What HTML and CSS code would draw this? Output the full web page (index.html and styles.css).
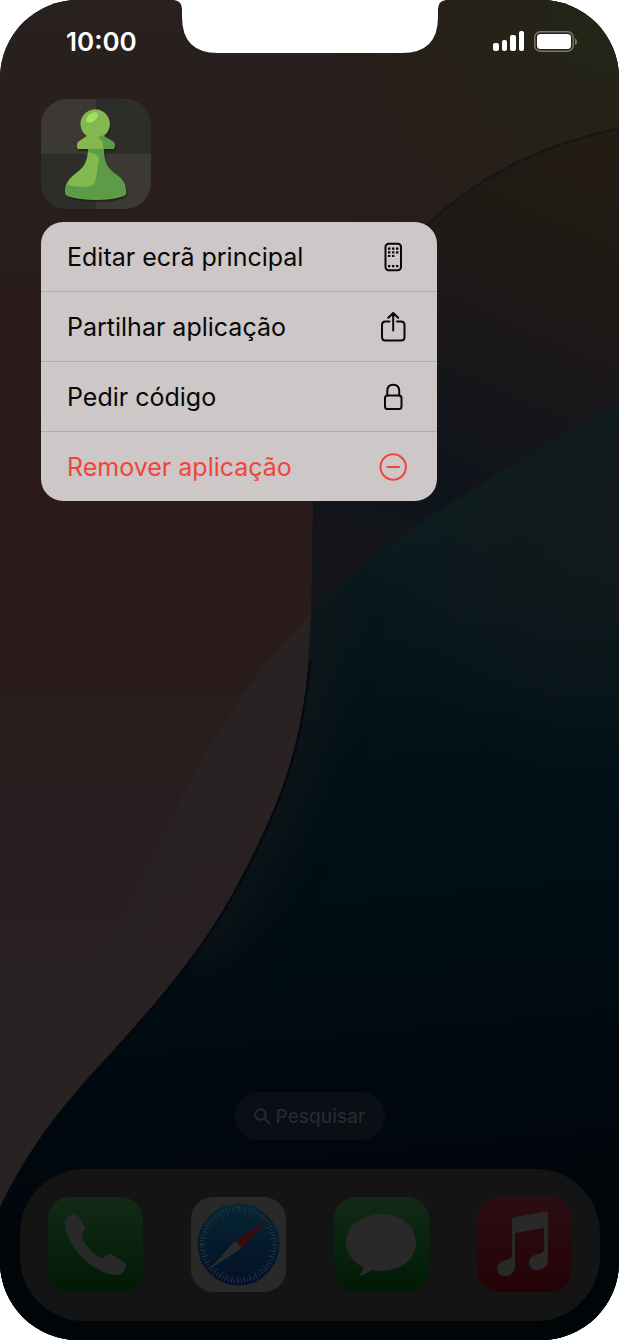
FILE: index.html
```
<!DOCTYPE html>
<html lang="pt">
<head>
    <meta charset="UTF-8">
    <meta name="viewport" content="width=device-width, initial-scale=1.0">
    <title>Ecrã principal</title>
    <link rel="stylesheet" href="styles.css">
</head>
<body>
    <div class="phone">
        <svg class="wallpaper" viewBox="0 0 619 1340" preserveAspectRatio="none" aria-hidden="true">
            <defs>
                <linearGradient id="redSide" x1="0" y1="0" x2="0" y2="1">
                    <stop offset="0" stop-color="#282120"/>
                    <stop offset=".14" stop-color="#291d1d"/>
                    <stop offset=".4" stop-color="#2a191a"/>
                    <stop offset=".56" stop-color="#291d1e"/>
                    <stop offset=".68" stop-color="#291f22"/>
                    <stop offset=".78" stop-color="#282322"/>
                    <stop offset="1" stop-color="#262221"/>
                </linearGradient>
                <radialGradient id="olive" gradientUnits="userSpaceOnUse" cx="600" cy="20" r="330">
                    <stop offset="0" stop-color="#242518"/>
                    <stop offset=".5" stop-color="#262016" stop-opacity=".9"/>
                    <stop offset="1" stop-color="#281d1b" stop-opacity="0"/>
                </radialGradient>
                <linearGradient id="middle" gradientUnits="userSpaceOnUse" x1="590" y1="130" x2="400" y2="560">
                    <stop offset="0" stop-color="#221c13"/>
                    <stop offset=".35" stop-color="#1f1917"/>
                    <stop offset=".6" stop-color="#16161a"/>
                    <stop offset=".85" stop-color="#0e141b"/>
                    <stop offset="1" stop-color="#15161a"/>
                </linearGradient>
                <linearGradient id="blue" gradientUnits="userSpaceOnUse" x1="420" y1="500" x2="500" y2="1340">
                    <stop offset="0" stop-color="#0d1e20"/>
                    <stop offset=".1" stop-color="#09181d"/>
                    <stop offset=".3" stop-color="#021118"/>
                    <stop offset=".6" stop-color="#000b12"/>
                    <stop offset=".8" stop-color="#01060c"/>
                    <stop offset="1" stop-color="#000508"/>
                </linearGradient>
                <radialGradient id="glow" gradientUnits="userSpaceOnUse" cx="619" cy="520" r="260">
                    <stop offset="0" stop-color="#12191b"/>
                    <stop offset="1" stop-color="#12191b" stop-opacity="0"/>
                </radialGradient>
                <linearGradient id="sand" gradientUnits="userSpaceOnUse" x1="190" y1="760" x2="260" y2="800">
                    <stop offset="0" stop-color="#282322"/>
                    <stop offset="1" stop-color="#292122"/>
                </linearGradient>
                <linearGradient id="sandFade" x1="0" y1="0" x2="0" y2="1">
                    <stop offset="0" stop-color="#fff"/>
                    <stop offset=".5" stop-color="#fff"/>
                    <stop offset="1" stop-color="#fff" stop-opacity="0"/>
                </linearGradient>
                <mask id="fade"><rect x="0" y="600" width="330" height="430" fill="url(#sandFade)"/></mask>
                <clipPath id="rightSide">
                    <path d="M660 120C560 137 490 166 430 222C345 300 315 400 314 510C313 570 313 620 309 660C301 750 280 806 233 893C200 952 165 994 100 1065C55 1114 20 1160 -8 1225V1400H660Z"/>
                </clipPath>
                <clipPath id="wave">
                    <path d="M640 386C540 455 390 524 300 625L-10 900V1350H640Z"/>
                </clipPath>
                <filter id="soft" filterUnits="userSpaceOnUse" color-interpolation-filters="sRGB" x="0" y="450" width="619" height="890"><feGaussianBlur stdDeviation="22"/></filter>
            </defs>
            <rect width="619" height="1340" fill="url(#redSide)"/>
            <rect width="619" height="400" fill="url(#olive)"/>
            <path mask="url(#fade)" fill="url(#sand)" d="M330 596C250 670 206 745 170 820C150 865 138 900 105 930V1040H330Z"/>
            <g clip-path="url(#rightSide)">
                <rect width="619" height="1340" fill="url(#middle)"/>
                <g clip-path="url(#wave)">
                    <rect width="619" height="1340" fill="url(#blue)"/>
                    <rect y="200" width="619" height="700" fill="url(#glow)"/>
                    <path fill="none" stroke="#14181a" stroke-width="44" opacity=".7" filter="url(#soft)" d="M316 560C313 750 284 806 240 893L190 960"/>
                </g>
                <path fill="none" stroke="#04090e" stroke-width="5" opacity=".8" d="M309 660C301 750 280 806 233 893C200 952 165 994 100 1065C55 1114 20 1160 -8 1225"/>
            </g>
            <path fill="none" stroke="#10171a" stroke-width="2" d="M660 120C560 137 490 166 430 222C345 300 315 400 314 510C313 570 313 620 309 660"/>
        </svg>

        <svg class="notch" width="272" height="53" viewBox="0 0 272 53" aria-hidden="true">
            <path fill="#fff" d="M0 0H272Q264 1 264 9V17Q264 53 228 53H44Q8 53 8 17V9Q8 1 0 0Z"/>
        </svg>

        <header class="status">
            <time class="clock">10:00</time>
            <div class="indicators">
                <svg width="32" height="20" viewBox="0 0 32 20" fill="#fff" aria-hidden="true">
                    <rect x="0" y="12" width="6" height="8" rx="2"/>
                    <rect x="9" y="9" width="5" height="11" rx="2"/>
                    <rect x="17" y="4" width="6" height="16" rx="2"/>
                    <rect x="26" y="0" width="5" height="20" rx="2"/>
                </svg>
                <svg width="44" height="21" viewBox="0 0 44 21" aria-hidden="true">
                    <rect x=".8" y=".8" width="38.4" height="19.4" rx="5.5" fill="none" stroke="#7e7a70" stroke-width="1.4"/>
                    <rect x="3" y="3" width="34" height="15" rx="3.5" fill="#fff"/>
                    <path d="M41 7q2 1 2 3.500t-2 3.500z" fill="#7e7a70"/>
                </svg>
            </div>
        </header>

        <main class="home">
            <button class="app" type="button" aria-label="Xadrez">
                <svg viewBox="0 0 110 110" aria-hidden="true">
                    <rect width="110" height="110" fill="#3c3834"/>
                    <path d="M55 0H110V55H55ZM0 55H55V110H0Z" fill="#2d2d2a"/>
                    <path transform="translate(1 2)" fill="#181b14" opacity=".6" d="M46 37A14.500 14.500 0 1 1 63 37L73 43Q75 46 73 50H63C63 66 69 71 76 76C83 81 85 86 85 92Q86 96 83 97Q72 101 55 101T26 97Q24 96 24 92C24 86 26 81 33 76C40 71 47 66 47 50H37Q35 46 37 43Z"/>
                    <path fill="#5d9b47" d="M46 37A14.500 14.500 0 1 1 63 37L73 43Q75 46 73 50H63C63 66 69 71 76 76C83 81 85 86 85 92Q86 96 83 97Q72 101 55 101T26 97Q24 96 24 92C24 86 26 81 33 76C40 71 47 66 47 50H37Q35 46 37 43Z"/>
                    <path fill="#82b84d" d="M46 37A14.500 14.500 0 1 1 66 33Q63 37 57 38L62 43V50H37Q35 46 37 43ZM47 53Q58 54 58 61L55 80Q53 88 44 88Q34 88 26 86C28 81 30 78 34 75C41 70 46 65 47 53Z"/>
                    <ellipse cx="51" cy="18.500" rx="6.800" ry="4" fill="#a5df68" transform="rotate(-38 51 18.500)"/>
                </svg>
            </button>

            <div class="menu" role="menu">
                <button class="item" type="button" role="menuitem">
                    <span>Editar ecrã principal</span>
                    <svg viewBox="0 0 30 30" aria-hidden="true">
                        <rect x="7.500" y="1.800" width="15.500" height="26.400" rx="3.200"/>
                        <path class="dots" d="M10 5.500h2.400v2.200H10zm4 0h2.400v2.200H14zm4 0h2.400v2.200H18zM10 9.200h2.400v2.200H10zm4 0h2.400v2.200H14zm4 0h2.400v2.200H18zM10 12.900h2.400v2.200H10zm4 0h2.400v2.200H14zM10 23h2.400v2.200H10zm4 0h2.400v2.200H14zm4 0h2.400v2.200H18z"/>
                    </svg>
                </button>
                <button class="item" type="button" role="menuitem">
                    <span>Partilhar aplicação</span>
                    <svg viewBox="0 0 30 30" aria-hidden="true">
                        <path d="M11.500 9.500H7.500Q4 9.500 4 13V25Q4 28.500 7.500 28.500H23Q26.500 28.500 26.500 25V13Q26.500 9.500 23 9.500H19M15.200 18.500V1M10.300 5.800L15.200 1L20.100 5.800"/>
                    </svg>
                </button>
                <button class="item" type="button" role="menuitem">
                    <span>Pedir código</span>
                    <svg viewBox="0 0 30 30" aria-hidden="true">
                        <rect x="7" y="13.500" width="16.500" height="13.500" rx="2.500"/>
                        <path d="M9.300 13.500V9Q9.300 2.800 15.200 2.800T21.200 9V13.500"/>
                    </svg>
                </button>
                <button class="item remove" type="button" role="menuitem">
                    <span>Remover aplicação</span>
                    <svg viewBox="0 0 30 30" aria-hidden="true">
                        <circle cx="15.200" cy="15" r="12.700"/>
                        <path d="M9.500 15H21"/>
                    </svg>
                </button>
            </div>
        </main>

        <button class="search" type="button">
            <svg width="16" height="16" viewBox="0 0 16 16" aria-hidden="true">
                <circle cx="6.500" cy="6.500" r="5.300"/>
                <path d="M10.500 10.500L15 15"/>
            </svg>
            Pesquisar
        </button>

        <nav class="dock">
            <a href="#" aria-label="Telefone">
                <svg viewBox="0 0 95 95" aria-hidden="true">
                    <defs>
                        <linearGradient id="green" x1="0" y1="0" x2="0" y2="1">
                            <stop offset="0" stop-color="#122a16"/>
                            <stop offset="1" stop-color="#001b05"/>
                        </linearGradient>
                    </defs>
                    <rect width="95" height="95" fill="url(#green)"/>
                    <path fill="#292929" d="M26 17Q28 16 30 19L37 30Q38 32 36 34Q33 38 34 41C37 48 45 57 53 61Q55 61 58 59Q61 56 63 57L77 66Q79 67 78 70Q75 78 68 78C44 76 18 49 17 26Q18 19 26 17Z"/>
                </svg>
            </a>
            <a href="#" aria-label="Safari">
                <svg viewBox="0 0 95 95" aria-hidden="true">
                    <defs>
                        <linearGradient id="compass" x1="0" y1="0" x2="0" y2="1">
                            <stop offset="0" stop-color="#052735"/>
                            <stop offset=".5" stop-color="#051a2c"/>
                            <stop offset="1" stop-color="#041029"/>
                        </linearGradient>
                    </defs>
                    <rect width="95" height="95" fill="#292929"/>
                    <circle cx="47.500" cy="47.500" r="41" fill="url(#compass)"/>
                    <g fill="none" stroke="#26343a">
                        <circle cx="47.500" cy="47.500" r="36.500" stroke-width="4" pathLength="72" stroke-dasharray=".26 .74"/>
                        <circle cx="47.500" cy="47.500" r="35" stroke-width="7" pathLength="36" stroke-dasharray=".13 .87"/>
                    </g>
                    <path fill="#3a0b0d" d="M76 23L51 51L44 44Z"/>
                    <path fill="#2b2c2e" d="M19 72L44 44L51 51Z"/>
                </svg>
            </a>
            <a href="#" aria-label="Mensagens">
                <svg viewBox="0 0 95 95" aria-hidden="true">
                    <rect width="95" height="95" fill="url(#green)"/>
                    <path fill="#292929" d="M47.500 17C67 17 82 29 82 45.500S67 74 47.500 74Q42 74 37 73Q32 78 24 79Q29 75 29 70C19 65 12 56 12 45.500C12 29 28 17 47.500 17Z"/>
                </svg>
            </a>
            <a href="#" aria-label="Música">
                <svg viewBox="0 0 95 95" aria-hidden="true">
                    <defs>
                        <linearGradient id="pink" x1="0" y1="0" x2="0" y2="1">
                            <stop offset="0" stop-color="#2b0d14"/>
                            <stop offset="1" stop-color="#240306"/>
                        </linearGradient>
                    </defs>
                    <rect width="95" height="95" fill="url(#pink)"/>
                    <path fill="#292929" d="M38 20L68 14.500Q71 14 71 17V62C71 69 66 73 60 73C55 73 52 70 52 66C52 61 56 58 61 57Q67 56 67 52V31L38 36V69C38 75 34 79 28 79C23 79 20 76 20 72C20 67 24 64 29 63Q35 62 35 58V23Q35 21 38 20Z"/>
                </svg>
            </a>
        </nav>
    </div>
</body>
</html>
```
FILE: styles.css
```
*{
    margin: 0;
    padding: 0;
    box-sizing: border-box;
}
body{
    background-color: white;
    font-family: Inter, "Liberation Sans", sans-serif;
}
button{
    border: 0;
    font-family: inherit;
    cursor: pointer;
}
.phone{
    position: relative;
    display: flex;
    flex-direction: column;
    min-height: 100vh;
    padding-bottom: 19px;
    border-radius: 78px;
    overflow: hidden;
    background-color: #10100f;
}
.wallpaper{
    position: absolute;
    top: 0;
    left: 0;
    width: 100%;
    height: 100%;
}
.notch{
    position: absolute;
    top: 0;
    left: 50%;
    transform: translateX(-50%);
}
.status, .home, .search, .dock{
    position: relative;
}
.status{
    display: flex;
    justify-content: space-between;
    align-items: center;
    height: 82px;
    padding: 0 41px 0 66px;
    color: white;
}
.clock{
    font-size: 26px;
    font-weight: 600;
}
.indicators{
    display: flex;
    align-items: center;
    gap: 9px;
}
.home{
    flex: 1;
    padding: 17px 41px 0;
}
.app{
    display: block;
    width: 110px;
    height: 110px;
    border-radius: 26px;
    overflow: hidden;
    background: none;
}
.app svg, .dock svg{
    display: block;
    width: 100%;
}
.menu{
    width: 396px;
    max-width: 100%;
    margin-top: 13px;
    border-radius: 22px;
    overflow: hidden;
    background-color: #cdc7c7;
}
.item{
    display: flex;
    justify-content: space-between;
    align-items: center;
    width: 100%;
    height: 70px;
    padding: 0 29px 0 26px;
    border-bottom: 1px solid #b2adad;
    background: none;
    color: #080808;
    font-size: 25px;
}
.item:last-child{
    height: 69px;
    border-bottom: 0;
}
.item svg{
    width: 30px;
    height: 30px;
    fill: none;
    stroke: currentColor;
    stroke-width: 2;
    stroke-linecap: round;
    stroke-linejoin: round;
}
.item .dots{
    fill: currentColor;
    stroke: none;
}
.item.remove{
    color: #f0453c;
}
.search{
    display: flex;
    align-items: center;
    align-self: center;
    gap: 6px;
    height: 48px;
    padding: 0 20px;
    border-radius: 24px;
    background-color: #0a0e15;
    color: #222b2f;
    font-size: 19px;
    font-weight: 500;
}
.search svg{
    fill: none;
    stroke: currentColor;
    stroke-width: 2;
    stroke-linecap: round;
}
.dock{
    display: flex;
    justify-content: space-between;
    margin: 29px 19px 0 20px;
    padding: 28px 28px 29px;
    border-radius: 64px;
    background-color: #141414;
}
.dock a{
    width: 95px;
    height: 95px;
    border-radius: 22px;
    overflow: hidden;
}
```
